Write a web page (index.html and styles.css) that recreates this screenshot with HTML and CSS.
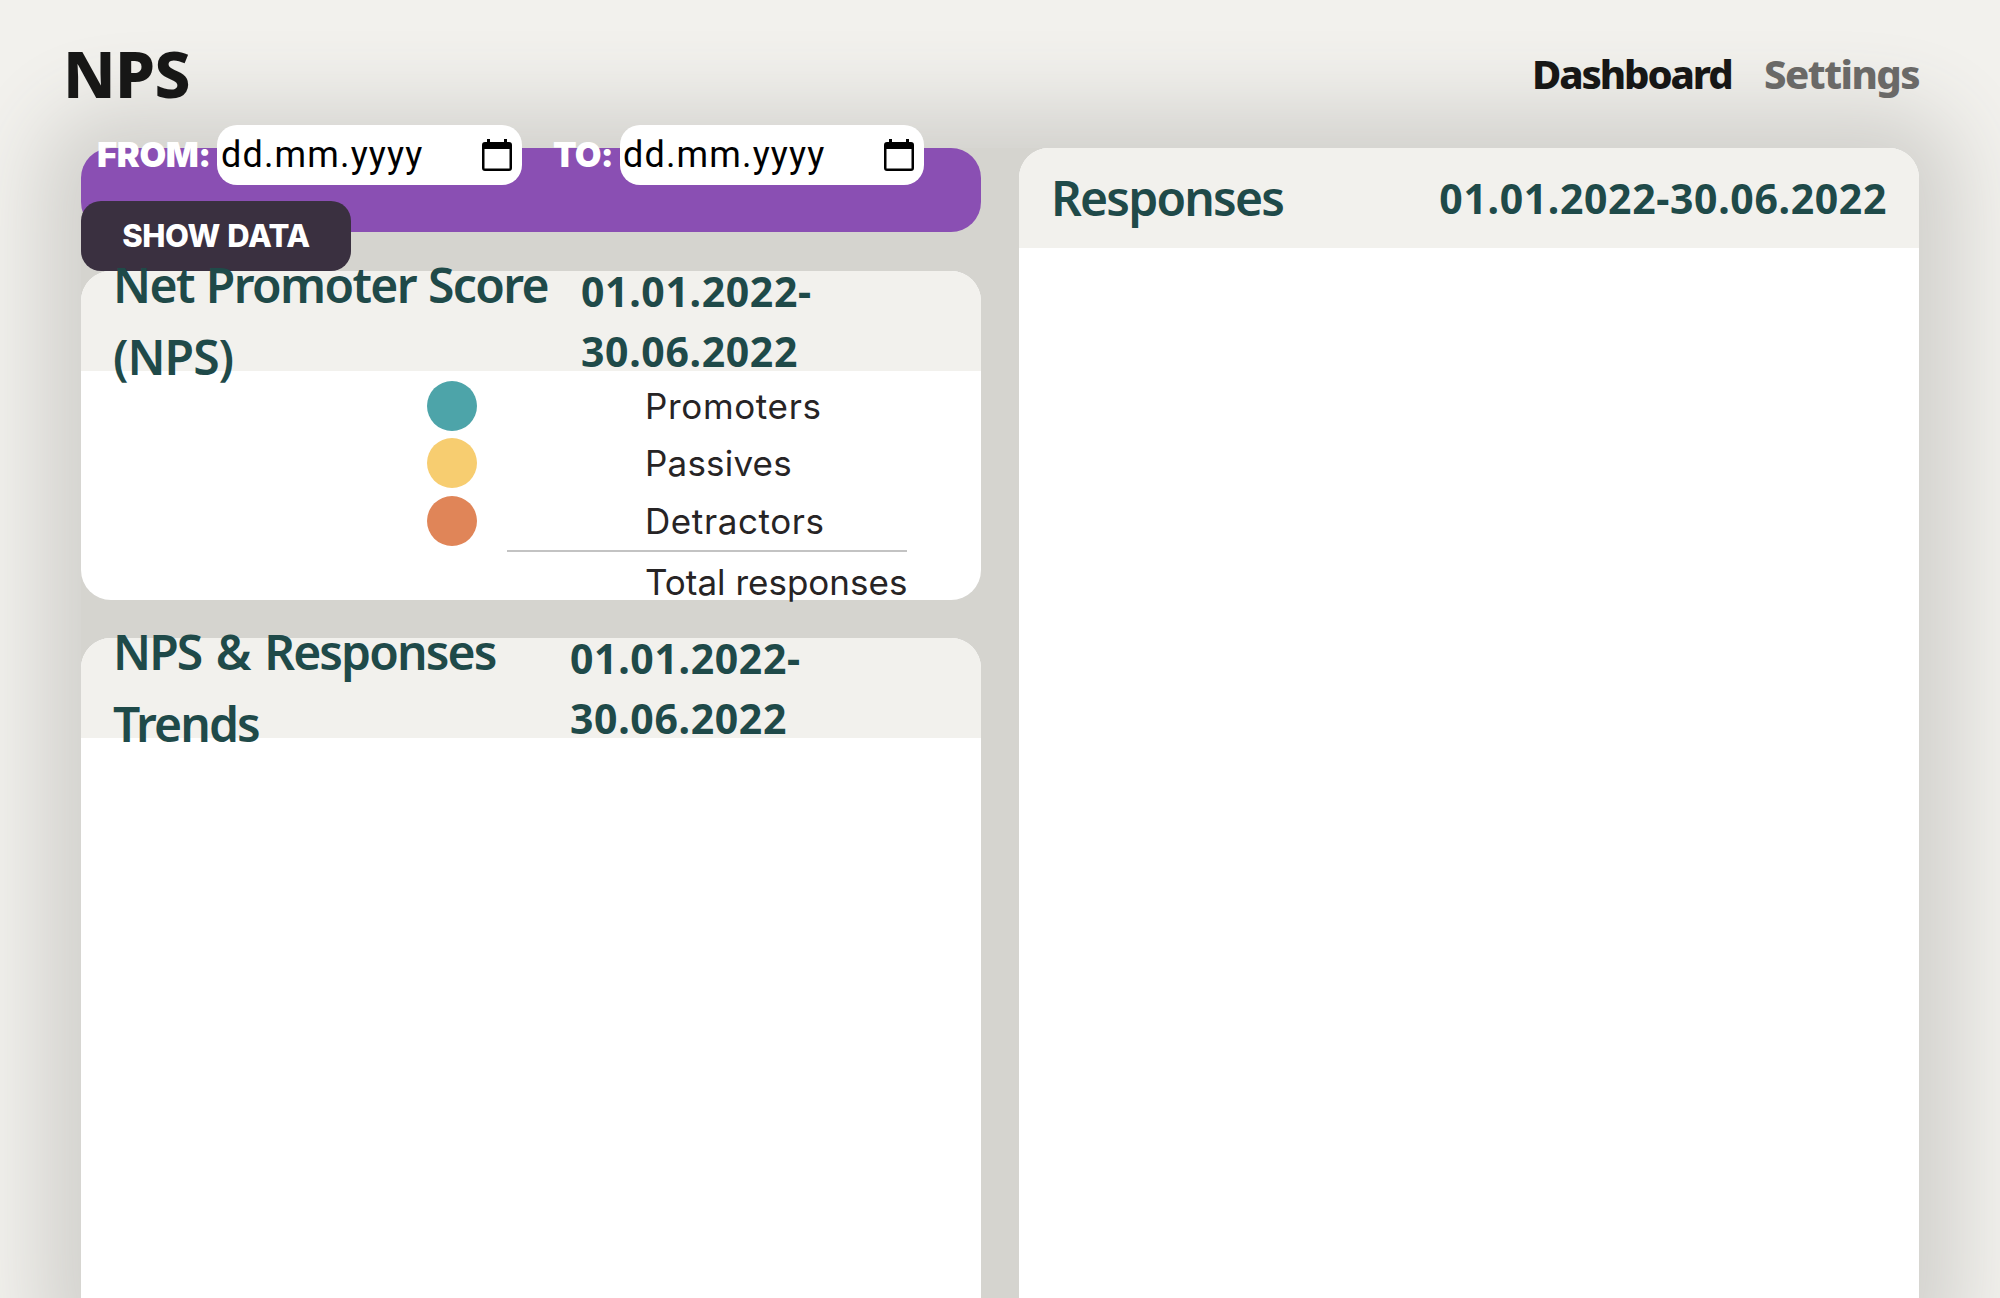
FILE: index.html
```html
<!DOCTYPE html>
<html lang="en">
<head>
<meta charset="utf-8">
<title>NPS</title>
<link rel="stylesheet" href="styles.css">
</head>
<body>
<header class="topbar">
  <h1 class="logo">NPS</h1>
  <nav class="nav">
    <a class="nav-link active">Dashboard</a>
    <a class="nav-link settings">Settings</a>
  </nav>
</header>
<main class="board">
  <div class="column">
    <form class="filter">
      <div class="dates">
        <span class="label from">FROM:</span>
        <div class="date-input"><span class="placeholder">dd.mm.yyyy</span>
          <svg class="calendar" viewBox="0 0 30 32"><path fill-rule="evenodd" d="M5 0h3v3h14V0h3v3h2a3 3 0 0 1 3 3v23a3 3 0 0 1-3 3H3a3 3 0 0 1-3-3V6a3 3 0 0 1 3-3h2zM2.500 10v19.500h25V10z"/></svg>
        </div>
        <span class="label to">TO:</span>
        <div class="date-input second"><span class="placeholder">dd.mm.yyyy</span>
          <svg class="calendar" viewBox="0 0 30 32"><path fill-rule="evenodd" d="M5 0h3v3h14V0h3v3h2a3 3 0 0 1 3 3v23a3 3 0 0 1-3 3H3a3 3 0 0 1-3-3V6a3 3 0 0 1 3-3h2zM2.500 10v19.500h25V10z"/></svg>
        </div>
      </div>
      <button class="show" type="button">SHOW DATA</button>
    </form>
    <section class="card score">
      <div class="card-head">
        <h2 class="title"><span class="t-net">Net Promoter Score</span><br><span class="t-abbr">(NPS)</span></h2>
        <p class="range score-range">01.01.2022-<br>30.06.2022</p>
      </div>
      <div class="legend">
        <div class="row"><i class="dot teal"></i><span class="name n-pro">Promoters</span></div>
        <div class="row"><i class="dot yellow"></i><span class="name n-pas">Passives</span></div>
        <div class="row last"><i class="dot orange"></i><span class="name n-det">Detractors</span></div>
        <div class="total"><span class="name n-tot">Total responses</span></div>
      </div>
    </section>
    <section class="card trends">
      <div class="card-head">
        <h2 class="title"><span class="t-trends">NPS &amp; Responses</span><br><span class="t-word">Trends</span></h2>
        <p class="range trends-range">01.01.2022-<br>30.06.2022</p>
      </div>
    </section>
  </div>
  <section class="card responses">
    <div class="card-head wide">
      <h2 class="title t-resp">Responses</h2>
      <p class="range">01.01.2022-30.06.2022</p>
    </div>
  </section>
</main>
</body>
</html>
```
FILE: styles.css
```css
* { box-sizing: border-box; }
html, body { height: 100%; }
body {
  margin: 0;
  overflow: hidden;
  background: #f2f1ed;
  font-family: Inter, sans-serif;
  color: #272425;
}
h1, h2, p { margin: 0; }
.topbar {
  position: relative;
  z-index: 1;
  height: 148px;
  padding: 0 81px 0 63px;
  display: flex;
  justify-content: space-between;
  align-items: flex-start;
  font-family: "Noto Sans", sans-serif;
  color: #171716;
}
.logo { font-size: 64px; font-weight: 800; line-height: 96px; letter-spacing: -0.6px; padding-top: 26px; }
.nav { display: flex; gap: 34px; padding-top: 44px; font-size: 40px; font-weight: 800; line-height: 60px; }
.nav-link { letter-spacing: -2.1px; white-space: nowrap; width: 198px; }
.nav-link.settings { color: #6a6967; width: 155px; letter-spacing: -1.5px; }
.board {
  height: 1190px;
  margin: 0 81px;
  display: grid;
  grid-template-columns: 900px 900px;
  gap: 38px;
  background: #d5d4cf;
  border-radius: 30px;
  box-shadow: 0 0 80px 40px #d2d1cd;
}
.column { display: flex; flex-direction: column; min-width: 0; }
.filter { height: 84px; flex: none; margin-bottom: 39px; background: #8a4fb3; border-radius: 30px; }
.dates { margin-top: -23px; height: 60px; padding-left: 16px; display: flex; align-items: center; white-space: nowrap; }
.label { font-size: 34.500px; font-weight: 900; color: #fff; line-height: 60px; }
.from { width: 120px; letter-spacing: -0.4px; }
.to { width: 67px; margin-left: 31px; letter-spacing: -0.7px; }
.date-input {
  width: 305px; height: 60px; padding: 0 10px 0 4px;
  display: flex; align-items: center; justify-content: space-between;
  background: #fff; border-radius: 20px; color: #000; font: 36px Roboto, sans-serif;
}
.second { width: 304px; padding-left: 3px; }
.placeholder { letter-spacing: 1.15px; }
.calendar { width: 30px; height: 32px; fill: #000; }
.show {
  display: block; position: relative; margin-top: 16px; width: 270px; height: 70px; padding: 0;
  border: 0; border-radius: 20px; background: #3a3040; color: #fff;
  font: 800 31px/70px Inter, sans-serif; letter-spacing: -0.4px; word-spacing: 1px;
}
.card { background: #fff; border-radius: 30px; position: relative; }
.score { height: 329px; flex: none; margin-bottom: 38px; }
.trends { flex: 1; }
.card-head {
  height: 100px; padding-left: 32px;
  display: flex; align-items: center;
  background: #f2f1ed; border-radius: 30px 30px 0 0;
  color: #1f4a49; font-family: "Noto Sans", sans-serif; white-space: nowrap;
}
.wide { justify-content: space-between; padding-right: 32px; }
.title { font-size: 48px; font-weight: 600; line-height: 72px; letter-spacing: -1px; flex: none; }
.t-net { letter-spacing: -1.6px; word-spacing: 1px; }
.t-trends { letter-spacing: -1.9px; word-spacing: 4px; }
.t-word { letter-spacing: -1.9px; }
.t-resp { letter-spacing: -1.8px; }
.range { font-size: 41px; font-weight: 700; line-height: 60px; letter-spacing: 0.63px; flex: none; }
.score .title { width: 468px; }
.trends .title { width: 457px; }
.legend { padding-top: 10px; }
.row { height: 57px; display: flex; padding-left: 346px; }
.row.last { height: 58px; margin-top: 1px; }
.dot { width: 50px; height: 50px; border-radius: 50%; margin-right: 169px; flex: none; }
.teal { background: #4da4a9; }
.yellow { background: #f7cd70; }
.orange { background: #e08558; }
.name { font-size: 35px; line-height: 50px; white-space: nowrap; margin-left: -1px; }
.n-pro { letter-spacing: 0.65px; }
.n-pas { letter-spacing: 0.2px; }
.n-det { letter-spacing: 0.6px; }
.total { width: 400px; margin: -4px 0 0 426px; padding: 5px 0 0 139px; border-top: 2px solid #c3c3c3; }
```
